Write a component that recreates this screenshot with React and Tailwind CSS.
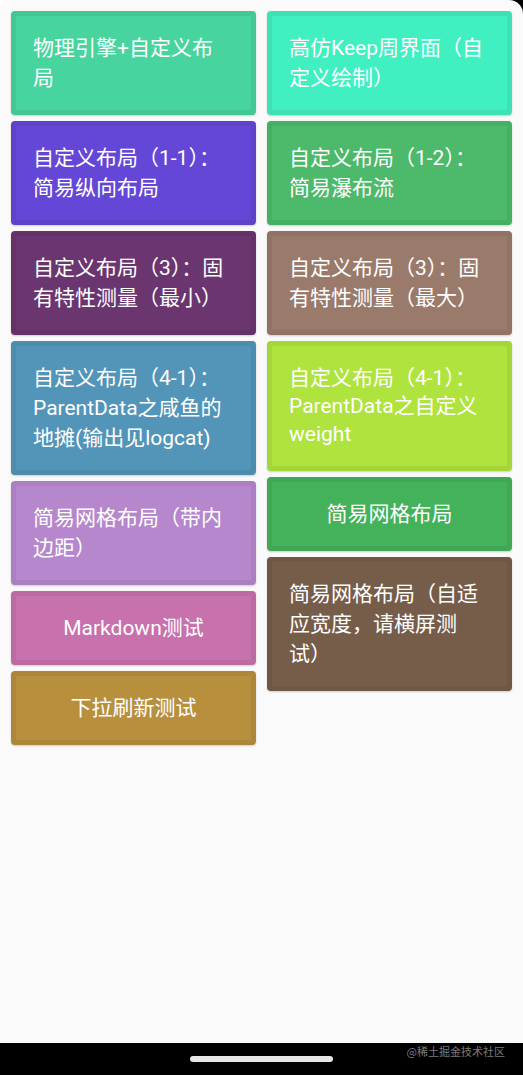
import React from "react";

const font = { fontFamily: "Roboto, 'Noto Sans CJK SC', 'Noto Sans', sans-serif" };

function Card({ lines, bg, h, center, leading = "leading-[30px]" }) {
  return (
    <div
      className={`${bg} ${h} rounded-[4px] border-[5px] border-black/[0.06] shadow-[0_1px_2px_rgba(0,0,0,0.18)] flex items-center ${center ? "justify-center text-center" : "justify-start text-left"} px-[17px] text-white text-[21px] ${leading}`}
    >
      <div className="whitespace-nowrap">
        {lines.map((l, i) => (
          <div key={i}>{l}</div>
        ))}
      </div>
    </div>
  );
}

export default function App() {
  return (
    <div className="w-[523px] h-[1075px] flex flex-col" style={font}>
      <div className="flex-1 flex bg-[linear-gradient(to_right,#ffffff_50%,#000000_50%)]">
        <div className="flex-1 bg-[#fafafa] rounded-tl-[8px] rounded-tr-[14px] grid grid-cols-2 gap-x-[11px] px-[11px] pt-[11px] content-start">
          <div className="flex flex-col gap-[6px]">
            <Card bg="bg-[#48d49e]" h="h-[104px]" lines={["物理引擎+自定义布", "局"]} />
            <Card bg="bg-[#6447d6]" h="h-[104px]" lines={["自定义布局（1-1）：", "简易纵向布局"]} />
            <Card bg="bg-[#6b3670]" h="h-[104px]" lines={["自定义布局（3）：固", "有特性测量（最小）"]} />
            <Card bg="bg-[#5395b8]" h="h-[134px]" lines={["自定义布局（4-1）：", "ParentData之咸鱼的", "地摊(输出见logcat)"]} />
            <Card bg="bg-[#b687cc]" h="h-[104px]" lines={["简易网格布局（带内", "边距）"]} />
            <Card bg="bg-[#c771ad]" h="h-[74px]" center lines={["Markdown测试"]} />
            <Card bg="bg-[#b8903d]" h="h-[74px]" center lines={["下拉刷新测试"]} />
          </div>
          <div className="flex flex-col gap-[6px]">
            <Card bg="bg-[#41f0c0]" h="h-[104px]" lines={["高仿Keep周界面（自", "定义绘制）"]} />
            <Card bg="bg-[#4cba6a]" h="h-[104px]" lines={["自定义布局（1-2）：", "简易瀑布流"]} />
            <Card bg="bg-[#9a7b6b]" h="h-[104px]" lines={["自定义布局（3）：固", "有特性测量（最大）"]} />
            <Card bg="bg-[#afe33d]" h="h-[130px]" leading="leading-[28px]" lines={["自定义布局（4-1）：", "ParentData之自定义", "weight"]} />
            <Card bg="bg-[#44b25a]" h="h-[74px]" center lines={["简易网格布局"]} />
            <Card bg="bg-[#765d4a]" h="h-[134px]" lines={["简易网格布局（自适", "应宽度，请横屏测", "试）"]} />
          </div>
        </div>
      </div>
      <div className="h-[32px] bg-black relative flex justify-center">
        <div className="mt-[13px] w-[143px] h-[6px] rounded-full bg-[#e6e6e6]" />
        <div className="absolute right-[18px] top-[1px] text-[11px] leading-[14px] text-[#7c7c7c]" style={{ fontFamily: "'Noto Sans CJK SC', sans-serif" }}>
          @稀土掘金技术社区
        </div>
      </div>
    </div>
  );
}
